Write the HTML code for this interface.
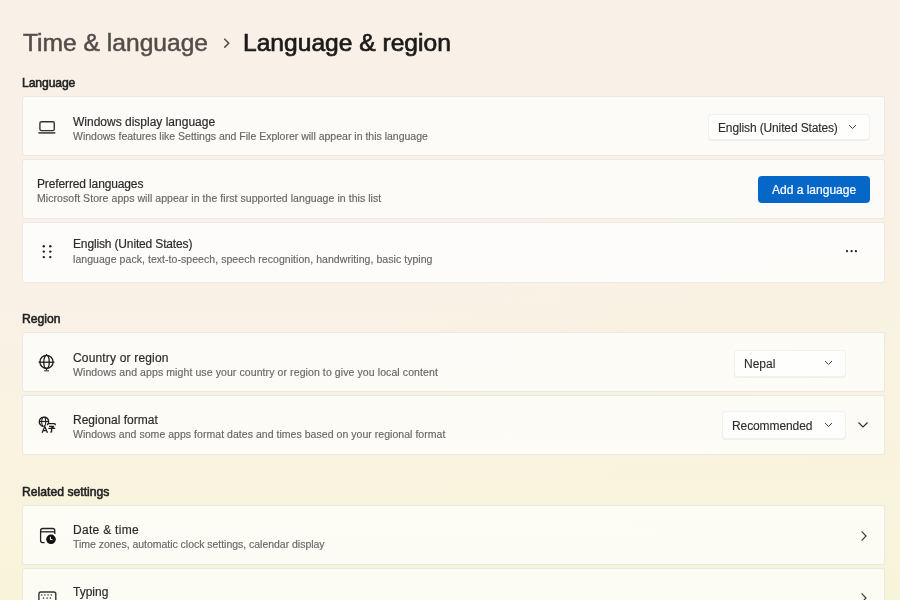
<!DOCTYPE html>
<html><head><meta charset="utf-8">
<style>
*{margin:0;padding:0;box-sizing:border-box}
html,body{width:900px;height:600px;overflow:hidden}
body{font-family:"Liberation Sans",sans-serif;background:radial-gradient(ellipse 60% 40% at 100% 62%,rgba(248,243,218,0.5),rgba(248,243,218,0)),linear-gradient(180deg,#f9f0e8 0%,#f9f0e7 30%,#f9f1e6 50%,#f9f3e0 75%,#f8f4d9 100%);position:relative;color:#1b1b1b}
.t{position:absolute;white-space:nowrap;line-height:1}
.t,.ct,.cs,.ddt{will-change:transform}
.h1a{left:22.5px;top:30.8px;font-size:24.6px;color:#524d49;-webkit-text-stroke:0.5px #524d49}
.h1b{left:242.5px;top:30.8px;font-size:24.6px;color:#1c1b1a;-webkit-text-stroke:0.7px #1c1b1a}
.sec{left:21.7px;font-size:12.2px;font-weight:normal;letter-spacing:0px;color:#222;-webkit-text-stroke:0.55px #222}
.card{position:absolute;left:22px;width:862.7px;background:rgba(255,255,255,0.7);border:1px solid rgba(0,0,0,0.075);border-radius:3px}
.ct{position:absolute;left:73px;font-size:12px;color:#2b2b2b;-webkit-text-stroke:0.18px #2b2b2b;white-space:nowrap;line-height:1}
.cs{position:absolute;left:73px;font-size:10.5px;color:#666;-webkit-text-stroke:0.15px #666;white-space:nowrap;line-height:1}
.dd{position:absolute;background:#fefefc;border:1px solid rgba(0,0,0,0.05);border-radius:4px;box-shadow:0 1px 0 rgba(0,0,0,0.05)}
.ddt{position:absolute;font-size:12px;color:#2c2c2c;-webkit-text-stroke:0.12px #2c2c2c;white-space:nowrap;line-height:1}
svg{position:absolute;overflow:visible}
</style></head><body>
<div class="t h1a">Time &amp; language</div>
<svg style="left:220px;top:35px" width="12" height="16" viewBox="0 0 12 16"><path d="M4.3 3.8 L8.7 8.2 L4.3 12.6" fill="none" stroke="#524d49" stroke-width="1.5"/></svg>
<div class="t h1b">Language &amp; region</div>

<div class="t sec" style="top:77px;letter-spacing:-0.12px">Language</div>

<!-- card 1 -->
<div class="card" style="top:96.2px;height:60px"></div>
<svg style="left:34px;top:115px" width="26" height="23" viewBox="0 0 26 23"><rect x="5.9" y="6.7" width="14.4" height="8.9" rx="1.6" fill="none" stroke="#333" stroke-width="1.4"/><line x1="4.4" y1="17.9" x2="21.3" y2="17.9" stroke="#333" stroke-width="1.5"/></svg>
<div class="ct" style="top:116px">Windows display language</div>
<div class="cs" style="top:131px">Windows features like Settings and File Explorer will appear in this language</div>
<div class="dd" style="left:708px;top:114px;width:161.5px;height:26px"></div>
<div class="ddt" style="left:718px;top:122px;letter-spacing:-0.13px">English (United States)</div>
<svg style="left:848px;top:124px" width="9" height="6" viewBox="0 0 9 6"><path d="M1.1 1.1 L4.5 4.5 L7.9 1.1" fill="none" stroke="#444" stroke-width="1"/></svg>

<!-- card 2 -->
<div class="card" style="top:158.5px;height:60px"></div>
<div class="ct" style="left:37px;top:178px;letter-spacing:-0.13px">Preferred languages</div>
<div class="cs" style="left:37px;top:193px;letter-spacing:0.06px">Microsoft Store apps will appear in the first supported language in this list</div>
<div style="position:absolute;left:758px;top:175.5px;width:112px;height:27px;background:#0567c8;border-radius:4px"></div>
<div class="ddt" style="left:772px;top:184px;color:#fff;-webkit-text-stroke:0.2px #fff">Add a language</div>

<!-- card 3 -->
<div class="card" style="top:221.5px;height:61px;background:rgba(255,255,255,0.8)"></div>
<svg style="left:40px;top:243px" width="14" height="17" viewBox="0 0 14 17"><g fill="#222"><circle cx="3.8" cy="3.3" r="1.2"/><circle cx="10.3" cy="3.3" r="1.2"/><circle cx="3.8" cy="8.6" r="1.2"/><circle cx="10.3" cy="8.6" r="1.2"/><circle cx="3.8" cy="14.1" r="1.2"/><circle cx="10.3" cy="14.1" r="1.2"/></g></svg>
<div class="ct" style="top:238px;letter-spacing:-0.15px">English (United States)</div>
<div class="cs" style="top:254px;letter-spacing:0.053px">language pack, text-to-speech, speech recognition, handwriting, basic typing</div>
<svg style="left:844px;top:248px" width="16" height="6" viewBox="0 0 16 6"><g fill="#222"><circle cx="3" cy="3.2" r="1.1"/><circle cx="7.6" cy="3.2" r="1.1"/><circle cx="11.9" cy="3.2" r="1.1"/></g></svg>

<div class="t sec" style="top:313px">Region</div>

<!-- card 4 -->
<div class="card" style="top:332px;height:60px"></div>
<svg style="left:34px;top:350px" width="26" height="25" viewBox="0 0 26 25"><g fill="none" stroke="#1e1e1e" stroke-width="1.3"><circle cx="12.5" cy="11.9" r="6.6"/><ellipse cx="12.5" cy="11.9" rx="2.7" ry="6.6"/><line x1="4.6" y1="12.2" x2="20.4" y2="12.2"/><line x1="12.5" y1="4" x2="12.5" y2="5.4"/><line x1="12.5" y1="18.5" x2="12.5" y2="20.6"/><line x1="10" y1="20.8" x2="15" y2="20.8" stroke="#555"/></g></svg>
<div class="ct" style="top:352px;letter-spacing:0.17px">Country or region</div>
<div class="cs" style="top:367px;letter-spacing:0.095px">Windows and apps might use your country or region to give you local content</div>
<div class="dd" style="left:734px;top:349.5px;width:111.5px;height:27px"></div>
<div class="ddt" style="left:744px;top:358px">Nepal</div>
<svg style="left:824px;top:360px" width="9" height="6" viewBox="0 0 9 6"><path d="M1 1 L4.5 4.5 L8 1" fill="none" stroke="#444" stroke-width="1"/></svg>

<!-- card 5 -->
<div class="card" style="top:394.5px;height:60px"></div>
<svg style="left:34px;top:412px" width="26" height="25" viewBox="0 0 26 25"><g fill="none" stroke="#1e1e1e" stroke-width="1.35"><path d="M14.4 11.4 A4.7 4.7 0 1 0 9.2 14.4"/><ellipse cx="9.7" cy="9.7" rx="2" ry="4.5" stroke-width="1.1"/><line x1="5" y1="9.5" x2="14.4" y2="9.5" stroke-width="1.1"/><path d="M8.1 20.8 L10.8 14.6 L13.5 20.8 M9.1 18.6 H12.5" stroke-width="1.3"/><path d="M13.4 13.2 Q13.4 11.6 14.5 11.6 H20.4 Q21.4 11.6 21.4 13.2 M15 14.3 H20 L17.6 15.6 M14.4 16.3 H21.2 M17.6 15.4 V19.3 Q17.6 20.1 16.4 20" stroke-width="1.35"/></g></svg>
<div class="ct" style="top:414px">Regional format</div>
<div class="cs" style="top:429px;letter-spacing:0.04px">Windows and some apps format dates and times based on your regional format</div>
<div class="dd" style="left:722px;top:411px;width:123.5px;height:27.5px"></div>
<div class="ddt" style="left:732px;top:419.5px;letter-spacing:-0.1px">Recommended</div>
<svg style="left:824px;top:422px" width="9" height="6" viewBox="0 0 9 6"><path d="M1 1 L4.5 4.5 L8 1" fill="none" stroke="#444" stroke-width="1"/></svg>
<svg style="left:857px;top:421px" width="12" height="8" viewBox="0 0 12 8"><path d="M1.5 1.5 L6 6 L10.5 1.5" fill="none" stroke="#333" stroke-width="1.2"/></svg>

<div class="t sec" style="top:486px">Related settings</div>

<!-- card 6 -->
<div class="card" style="top:505px;height:59.5px"></div>
<svg style="left:34px;top:522px" width="26" height="26" viewBox="0 0 26 26"><g fill="none" stroke="#222" stroke-width="1.3"><path d="M10.6 20.6 H8.6 A2.2 2.2 0 0 1 6.6 18.4 V8.6 A2.2 2.2 0 0 1 8.8 6.5 H18.6 A2.2 2.2 0 0 1 20.8 8.6 V12"/><line x1="6.6" y1="9.8" x2="20.8" y2="9.8"/></g><circle cx="17" cy="17.3" r="4.8" fill="#111"/><path d="M16.4 14.9 V17.6 H18.4" fill="none" stroke="#fff" stroke-width="1"/></svg>
<div class="ct" style="top:524px;letter-spacing:0.3px">Date &amp; time</div>
<div class="cs" style="top:539px;letter-spacing:-0.025px">Time zones, automatic clock settings, calendar display</div>
<svg style="left:859px;top:530px" width="9" height="12" viewBox="0 0 9 12"><path d="M2.6 1.4 L7 6 L2.6 10.6" fill="none" stroke="#3a3a3a" stroke-width="1.2"/></svg>

<!-- card 7 -->
<div class="card" style="top:567.5px;height:60px"></div>
<svg style="left:30px;top:580px" width="32" height="24" viewBox="0 0 32 24"><rect x="8.9" y="12" width="16.9" height="12" rx="2" fill="none" stroke="#333" stroke-width="1.4"/><g fill="#333"><circle cx="11.7" cy="15" r="0.8"/><circle cx="14.9" cy="15" r="0.8"/><circle cx="18.1" cy="15" r="0.8"/><circle cx="21.3" cy="15" r="0.8"/><circle cx="13.5" cy="18.1" r="0.8"/><circle cx="17.1" cy="18.1" r="0.8"/><circle cx="20.3" cy="18.1" r="0.8"/></g></svg>
<div class="ct" style="top:586px">Typing</div>
<svg style="left:859px;top:592px" width="9" height="12" viewBox="0 0 9 12"><path d="M2.6 1.4 L7 6 L2.6 10.6" fill="none" stroke="#3a3a3a" stroke-width="1.2"/></svg>
</body></html>
